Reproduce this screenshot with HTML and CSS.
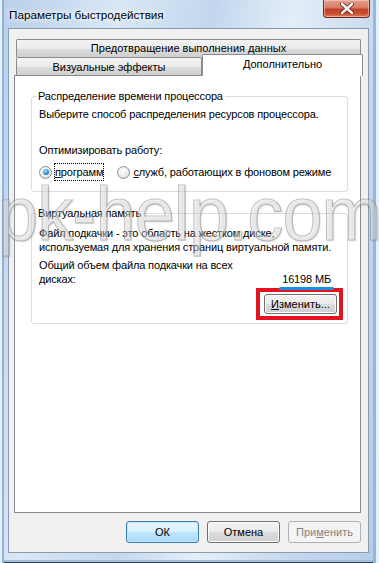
FILE: index.html
```html
<!DOCTYPE html>
<html lang="ru">
<head>
    <meta charset="UTF-8">
    <title>Параметры быстродействия</title>
    <link rel="stylesheet" href="styles.css">
</head>
<body>

    <div class="window">
        <div class="titlebar">
            <span class="title">Параметры быстродействия</span>
            <div class="close">
                <svg width="14" height="11" viewBox="0 0 14 11">
                    <path d="M2 1 L12 10 M12 1 L2 10" stroke="#5a1a10" stroke-width="4" stroke-linecap="round"/>
                    <path d="M2 1 L12 10 M12 1 L2 10" stroke="#ffffff" stroke-width="2.4" stroke-linecap="round"/>
                </svg>
            </div>
        </div>

        <div class="client">
            <div class="tabs">
                <div class="tab-row back">
                    <div class="tab wide">Предотвращение выполнения данных</div>
                </div>
                <div class="tab-row front">
                    <div class="tab visual">Визуальные эффекты</div>
                    <div class="tab active">Дополнительно</div>
                </div>

                <div class="page">
                    <fieldset class="group cpu">
                        <legend>Распределение времени процессора</legend>
                        <p class="line">Выберите способ распределения ресурсов процессора.</p>
                        <p class="line optimize">Оптимизировать работу:</p>
                        <div class="radios">
                            <label class="radio checked"><span class="dot"></span><span class="focus"><u>п</u>рограмм</span></label>
                            <label class="radio"><span class="dot"></span><span><u>с</u>лужб, работающих в фоновом режиме</span></label>
                        </div>
                    </fieldset>

                    <fieldset class="group memory">
                        <legend>Виртуальная память</legend>
                        <p class="line">Файл подкачки - это область на жестком диске,<br>используемая для хранения страниц виртуальной памяти.</p>
                        <div class="total">
                            <p class="line">Общий объем файла подкачки на всех<br>дисках:</p>
                            <span class="size">16198 МБ</span>
                        </div>
                        <div class="change-row">
                            <div class="highlight">
                                <button class="btn"><u>И</u>зменить...</button>
                            </div>
                        </div>
                    </fieldset>
                </div>
            </div>

            <div class="buttons">
                <button class="btn default">ОК</button>
                <button class="btn">Отмена</button>
                <button class="btn disabled">При<u>м</u>енить</button>
            </div>
        </div>
    </div>

    <div class="watermark">pk-help.com</div>

</body>
</html>
```

FILE: styles.css
```css
body {
    margin: 0;
    padding: 0;
    width: 379px;
    height: 563px;
    overflow: hidden;
    font-family: 'Liberation Sans', sans-serif;
    font-size: 11px;
    color: #000;
    position: relative;
}

.window {
    width: 379px;
    height: 563px;
    box-sizing: border-box;
    padding: 0 10px 10px 8px;
    display: flex;
    flex-direction: column;
    background: linear-gradient(100deg, #b7cfe9 0%, #d9e7f5 25%, #c2d7ee 45%, #e4eef8 62%, #c6d9ee 80%, #b4cde8 100%);
    box-shadow: inset 2px 0 0 #e8f1fa, inset 4px 0 0 #8db3dc, inset -3px 0 0 #e8f1fa, inset -6px 0 0 #93b8df, inset 0 -1px 0 #3b3f46, inset 0 -3px 0 #9ebfe2;
}

.titlebar {
    height: 28px;
    display: flex;
    align-items: flex-start;
    justify-content: space-between;
}

.title {
    margin-top: 8px;
    margin-left: 1px;
    font-size: 11.7px;
    line-height: 14px;
    text-shadow: 0 0 6px #fff, 0 0 4px #fff;
}

.close {
    width: 47px;
    height: 18px;
    margin-right: -1px;
    box-sizing: border-box;
    border: 1px solid #6e2a22;
    border-top: none;
    border-radius: 0 0 4px 4px;
    background: linear-gradient(#e6a08f 0%, #d87a66 45%, #c2402a 55%, #c8502f 80%, #e08060 100%);
    box-shadow: inset 0 0 0 1px rgba(255, 220, 200, 0.5);
    display: flex;
    justify-content: center;
    align-items: center;
}

.client {
    flex: 1;
    background-color: #f0f0f0;
    border: 1px solid #8a9bb0;
    display: flex;
    flex-direction: column;
    padding: 10px 7px 0 5px;
}

.tabs {
    display: flex;
    flex-direction: column;
}

.tab-row {
    display: flex;
    padding-left: 2px;
}

.tab {
    box-sizing: border-box;
    border: 1px solid #898c95;
    border-bottom: none;
    background: linear-gradient(#f3f3f3 0%, #ebebeb 50%, #dddddd 51%, #cfcfcf 100%);
    text-align: center;
    border-radius: 2px 2px 0 0;
    white-space: nowrap;
}

.tab.wide {
    flex: 1;
    height: 18px;
    line-height: 17px;
}

.tab.visual {
    width: 186px;
    height: 18px;
    line-height: 19px;
}

.tab.active {
    flex: 1;
    height: 22px;
    margin-top: -3px;
    margin-right: -2px;
    margin-bottom: -1px;
    background: #fff;
    line-height: 18px;
    position: relative;
    z-index: 1;
}

.page {
    height: 423px;
    background: #fff;
    border: 1px solid #898c95;
    padding: 13px 12px 0 16px;
    letter-spacing: -0.15px;
}

.group {
    margin: 0;
    min-width: 0;
    padding: 0 6px 0 7px;
    border: 1px solid #d5dfe5;
    border-radius: 3px;
}

.group legend {
    padding: 0 2px;
    margin-left: -3px;
    line-height: 14px;
}

.line {
    margin: 0;
    line-height: 14px;
    white-space: nowrap;
}

.cpu {
    padding-bottom: 11px;
}

.cpu .line {
    margin-top: 4px;
}

.cpu .optimize {
    margin-top: 22px;
}

.radios {
    display: flex;
    margin-top: 7px;
    gap: 14px;
    white-space: nowrap;
    line-height: 16px;
}

.radio {
    display: flex;
    align-items: center;
    gap: 3px;
}

.radio .dot {
    width: 11px;
    height: 11px;
    border-radius: 50%;
    border: 1px solid #8e8f8f;
    background: radial-gradient(circle at 40% 35%, #ffffff 0%, #eaeaea 60%, #d0d0d0 100%);
    display: flex;
    justify-content: center;
    align-items: center;
}

.radio.checked .dot::after {
    content: "";
    width: 6px;
    height: 6px;
    border-radius: 50%;
    background: radial-gradient(circle at 40% 35%, #9fe3ff 0%, #2a8fd0 55%, #11507f 100%);
}

.focus {
    outline: 1px dotted #000;
    outline-offset: 0;
}

.radio u, .btn u {
    text-decoration: underline;
    text-underline-offset: 1px;
}

.memory {
    margin-top: 14px;
    padding-bottom: 3px;
}

.memory .line {
    margin-top: 6px;
}

.total {
    display: flex;
    justify-content: space-between;
    align-items: flex-end;
}

.total .line {
    margin-top: 4px;
}

.size {
    margin-right: 10px;
    line-height: 14px;
    position: relative;
}

.size::after {
    content: "";
    position: absolute;
    left: -3px;
    right: -3px;
    bottom: -4px;
    height: 3px;
    border-radius: 2px;
    background: #1a8ee0;
}

.change-row {
    display: flex;
    justify-content: flex-end;
    margin-top: 2px;
}

.highlight {
    border: 4px solid #e3141f;
    padding: 2px 2px 2px 4px;
    margin-right: -2px;
}

.btn {
    font-family: 'Liberation Sans', sans-serif;
    font-size: 11px;
    color: #000;
    width: 73px;
    height: 22px;
    padding: 0;
    border: 1px solid #707070;
    border-radius: 3px;
    background: linear-gradient(#f2f2f2 0%, #ebebeb 50%, #dddddd 51%, #cfcfcf 100%);
    box-shadow: inset 0 0 0 1px #fcfcfc;
}

.highlight .btn {
    width: 73px;
    height: 20px;
}

.btn.default {
    border-color: #3c7fb1;
    background: linear-gradient(#eaf6fd 0%, #d9f0fc 50%, #bee6fd 51%, #a7d9f5 100%);
    box-shadow: inset 0 0 0 1px #c4e5f6;
}

.btn.disabled {
    color: #838383;
    border-color: #adb2b5;
    background: #f4f4f4;
    box-shadow: none;
}

.buttons {
    display: flex;
    justify-content: flex-end;
    gap: 8px;
    margin-top: 8px;
}

.watermark {
    position: absolute;
    left: -2px;
    top: 176px;
    font-family: 'Liberation Sans', sans-serif;
    font-size: 76px;
    line-height: 76px;
    letter-spacing: -1px;
    transform: scaleX(0.95);
    transform-origin: left top;
    color: rgba(255, 255, 255, 0.3);
    -webkit-text-stroke: 1.2px rgba(110, 110, 110, 0.4);
    text-shadow: 1px 1px 2px rgba(120, 120, 120, 0.25);
    white-space: nowrap;
    pointer-events: none;
}
```
